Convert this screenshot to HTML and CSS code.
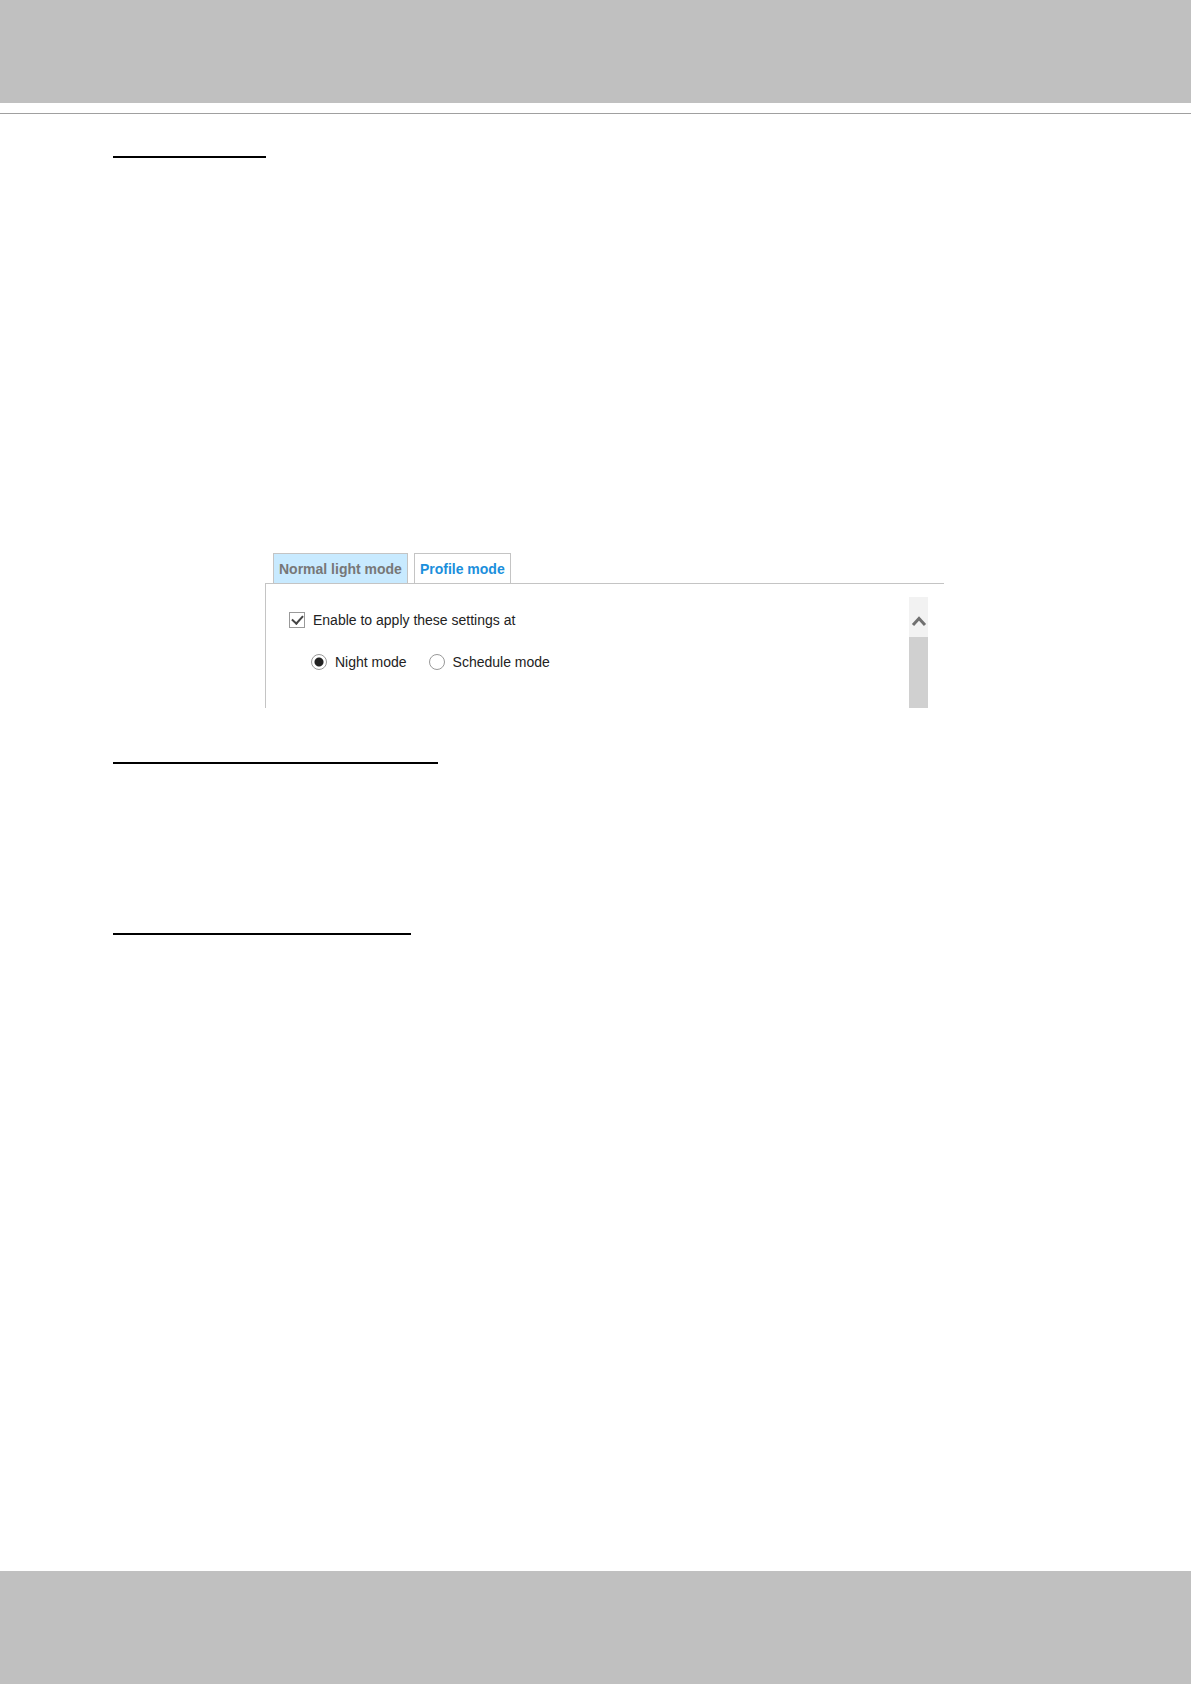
FILE: index.html
```html
<!DOCTYPE html>
<html lang="en">
<head>
  <meta charset="UTF-8" />
  <meta name="viewport" content="width=device-width, initial-scale=1.0" />
  <title>Profile mode</title>
  <link rel="stylesheet" href="styles.css">
</head>
<body>
  <header class="page-header"></header>

  <main class="content">
    <hr class="rule rule-short">

    <section class="settings">
      <div class="tabs" role="tablist">
        <button type="button" class="tab active" role="tab" aria-selected="true">Normal light mode</button>
        <button type="button" class="tab" role="tab" aria-selected="false">Profile mode</button>
      </div>
      <div class="panel">
        <form class="options">
          <div class="option">
            <input type="checkbox" id="enable" checked>
            <label for="enable">Enable to apply these settings at</label>
          </div>
          <div class="modes">
            <div class="option">
              <input type="radio" id="night" name="mode" checked>
              <label for="night">Night mode</label>
            </div>
            <div class="option">
              <input type="radio" id="schedule" name="mode">
              <label for="schedule">Schedule mode</label>
            </div>
          </div>
        </form>
        <div class="scrollbar">
          <button type="button" class="scroll-up" aria-label="Scroll up">
            <svg width="16" height="12" viewBox="0 0 16 12"><path d="M2 10L8 3.5L14 10" fill="none" stroke="#707070" stroke-width="3"/></svg>
          </button>
          <div class="thumb"></div>
        </div>
      </div>
    </section>

    <hr class="rule rule-long">
    <hr class="rule rule-medium">
  </main>

  <footer class="page-footer"></footer>
</body>
</html>
```
FILE: styles.css
```css
* {
  box-sizing: border-box;
}
body {
  display: flex;
  flex-direction: column;
  min-height: 100vh;
  margin: 0;
  background: #fff;
  color: #222;
  font-family: "Liberation Sans", Arial, sans-serif;
  font-size: 14px;
}
.page-header {
  height: 114px;
  background: #c0c0c0;
  border-bottom: 1px solid #a0a0a0;
  background-clip: content-box;
  padding-bottom: 10px;
}
.page-footer {
  height: 113px;
  background: #c0c0c0;
}
.content {
  flex: 1;
  padding: 42px 113px 0;
}

/* section rules */
.rule {
  height: 2px;
  margin: 0;
  border: none;
  background: #000;
}
.rule-short {
  max-width: 153px;
}
.rule-long {
  max-width: 325px;
}
.rule-medium {
  max-width: 298px;
  margin-top: 169px;
}

/* settings box */
.settings {
  max-width: 679px;
  margin: 395px auto 54px 152px;
}
.tabs {
  display: flex;
  gap: 6px;
  padding-left: 8px;
}
.tab {
  height: 30px;
  padding: 0 5px;
  border: 1px solid #c4c4c4;
  border-bottom: none;
  background: #fff;
  color: #1b8fdc;
  font: bold 14px "Liberation Sans", Arial, sans-serif;
  cursor: pointer;
}
.tab.active {
  background: #c8eaff;
  color: #777;
}
.panel {
  display: flex;
  justify-content: space-between;
  height: 125px;
  padding: 13px 16px 0 23px;
  border-top: 1px solid #c4c4c4;
  border-left: 1px solid #c4c4c4;
}
.options {
  padding-top: 15px;
}
.option {
  display: flex;
  align-items: center;
  gap: 8px;
  height: 16px;
}
.option input {
  appearance: none;
  width: 16px;
  height: 16px;
  margin: 0;
  border: 1px solid #999;
  background: #fff;
}
.option input[type="checkbox"] {
  display: grid;
  place-items: center;
}
.option input[type="checkbox"]:checked::before {
  content: "";
  width: 5px;
  height: 9px;
  margin-bottom: 3px;
  border: solid #444;
  border-width: 0 2px 2px 0;
  transform: rotate(42deg);
}
.option input[type="radio"] {
  border-radius: 50%;
}
.option input[type="radio"]:checked {
  background: radial-gradient(circle, #222 4px, #fff 5px);
}
.modes {
  display: flex;
  gap: 22px;
  padding: 26px 0 0 22px;
}

/* scrollbar */
.scrollbar {
  display: flex;
  flex-direction: column;
  width: 19px;
}
.scroll-up {
  height: 40px;
  padding: 8px 0 0;
  border: none;
  background: #f2f2f2;
}
.scroll-up svg {
  display: block;
  margin: 0 auto;
}
.thumb {
  flex: 1;
  background: #d0d0d0;
}
```
